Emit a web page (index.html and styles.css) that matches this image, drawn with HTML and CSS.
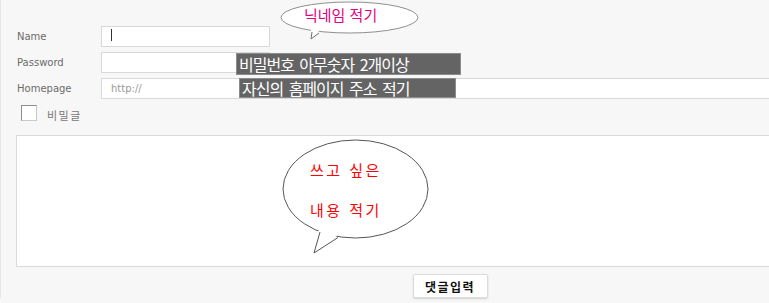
FILE: index.html
```html
<!DOCTYPE html>
<html lang="ko">
<head>
    <meta charset="UTF-8">
    <meta name="viewport" content="width=device-width, initial-scale=1.0">
    <title>댓글 쓰기</title>
    <link rel="stylesheet" href="styles.css">
</head>
<body>
    <form class="comment-form">
        <div class="row">
            <label class="label" for="name">Name</label>
            <span class="field">
                <input class="input short" id="name" type="text">
                <span class="caret"></span>
            </span>
        </div>
        <div class="row">
            <label class="label" for="password">Password</label>
            <input class="input short" id="password" type="password">
            <span class="tip tip-password">비밀번호 아무숫자 2개이상</span>
        </div>
        <div class="row">
            <label class="label" for="homepage">Homepage</label>
            <input class="input long" id="homepage" type="text" placeholder="http://">
            <span class="tip tip-homepage">자신의 홈페이지 주소 적기</span>
        </div>
        <div class="secret">
            <input class="check" id="secret" type="checkbox">
            <label for="secret">비밀글</label>
        </div>
        <textarea class="content"></textarea>
        <div class="submit">
            <button class="submit-button" type="button">댓글입력</button>
        </div>

        <!-- speech bubbles -->
        <div class="bubble bubble-nick">
            <svg class="bubble-shape" width="140" height="40" viewBox="0 0 140 40">
                <ellipse cx="69.5" cy="16.5" rx="68.5" ry="15.5" fill="#fff" stroke="#8f8f8f"/>
                <polygon points="31,27 31,38 40,29" fill="#fff"/>
                <polyline points="32,31 31,38 39,32" fill="none" stroke="#6f6f6f"/>
            </svg>
            <span class="bubble-text">닉네임 적기</span>
        </div>
        <div class="bubble bubble-content">
            <svg class="bubble-shape" width="150" height="118" viewBox="0 0 150 118">
                <ellipse cx="74.5" cy="51" rx="72.5" ry="49" fill="#fff" stroke="#555"/>
                <polygon points="38,90 33,115 58,96" fill="#fff"/>
                <polyline points="39,94 33,115 57,99.5" fill="none" stroke="#555"/>
            </svg>
            <p class="bubble-text">쓰고 싶은<br>내용 적기</p>
        </div>
    </form>
</body>
</html>
```

FILE: styles.css
```css
html, body {
    margin: 0;
    background: #f7f7f7;
}
body {
    height: 303px;
    overflow: hidden;
    font-family: "DejaVu Sans", Tahoma, sans-serif;
}
.comment-form {
    position: relative;
    width: 868px;
    padding: 26px 0 0 15px;
    border-left: 1px solid #e6e6e6;
}
.row {
    position: relative;
    display: flex;
    align-items: center;
    height: 21px;
    margin-bottom: 5px;
}
.label {
    box-sizing: border-box;
    width: 85px;
    padding-left: 1px;
    font-size: 10px;
    color: #6b6b6b;
}
.field {
    position: relative;
    display: flex;
}
.input {
    box-sizing: border-box;
    height: 21px;
    margin: 0;
    padding: 0 9px;
    border: 1px solid #d8d8d8;
    background: #fff;
    font-family: "DejaVu Sans", Tahoma, sans-serif;
    font-size: 10px;
    color: #333;
    outline: none;
}
.input::placeholder {
    color: #9a9a9a;
}
.input.short {
    width: 169px;
}
.input.long {
    flex: 1;
}
.caret {
    position: absolute;
    left: 10px;
    top: 3px;
    width: 1px;
    height: 12px;
    background: #333;
}
.tip {
    position: absolute;
    box-sizing: border-box;
    padding-left: 2px;
    background: #646464;
    border: 1px solid #8c8c8c;
    color: #fff;
    font-family: "Noto Sans CJK KR", sans-serif;
    font-size: 16px;
    letter-spacing: -1px;
    word-spacing: 2px;
    white-space: nowrap;
}
.tip-password {
    left: 220px;
    top: 1px;
    width: 225px;
    height: 22px;
    line-height: 20px;
}
.tip-homepage {
    left: 223px;
    top: 0;
    width: 217px;
    height: 20px;
    line-height: 18px;
}
.secret {
    display: flex;
    align-items: center;
    height: 16px;
    margin: 6px 0 14px 5px;
}
.check {
    appearance: none;
    box-sizing: border-box;
    width: 16px;
    height: 16px;
    margin: 0;
    background: #fff;
    border: 1px solid #c8c8c8;
    border-top-color: #8c8c8c;
    border-left-color: #8c8c8c;
}
.secret label {
    margin: 4px 0 0 10px;
    font-family: "Noto Sans CJK KR", sans-serif;
    font-size: 11px;
    letter-spacing: 1.5px;
    color: #777;
}
.content {
    display: block;
    box-sizing: border-box;
    width: 100%;
    height: 132px;
    margin: 0;
    border: 1px solid #d9d9d9;
    background: #fff;
    resize: none;
    outline: none;
}
.submit {
    margin-top: 7px;
    text-align: center;
}
.submit-button {
    width: 75px;
    height: 24px;
    padding: 0;
    background: #fff;
    border: 1px solid #dcdcdc;
    border-radius: 2px;
    box-shadow: 0 1px 2px rgba(0, 0, 0, 0.15);
    font-family: "Noto Sans CJK KR", sans-serif;
    font-size: 12px;
    font-weight: bold;
    letter-spacing: 1.5px;
    color: #111;
    cursor: pointer;
}
.bubble {
    position: absolute;
    font-family: "Noto Sans CJK KR", sans-serif;
}
.bubble-shape {
    position: absolute;
    left: 0;
    top: 0;
}
.bubble-text {
    position: relative;
    margin: 0;
}
.bubble-nick {
    left: 279px;
    top: 1px;
    width: 140px;
    height: 40px;
}
.bubble-nick .bubble-text {
    display: block;
    padding: 6px 0 0 24px;
    font-size: 15px;
    line-height: 16px;
    color: #e5007e;
}
.bubble-content {
    left: 280px;
    top: 138px;
    width: 150px;
    height: 118px;
}
.bubble-content .bubble-text {
    padding: 12px 0 0 29px;
    font-size: 15px;
    line-height: 40px;
    letter-spacing: 2.5px;
    color: #ff0000;
}
```
